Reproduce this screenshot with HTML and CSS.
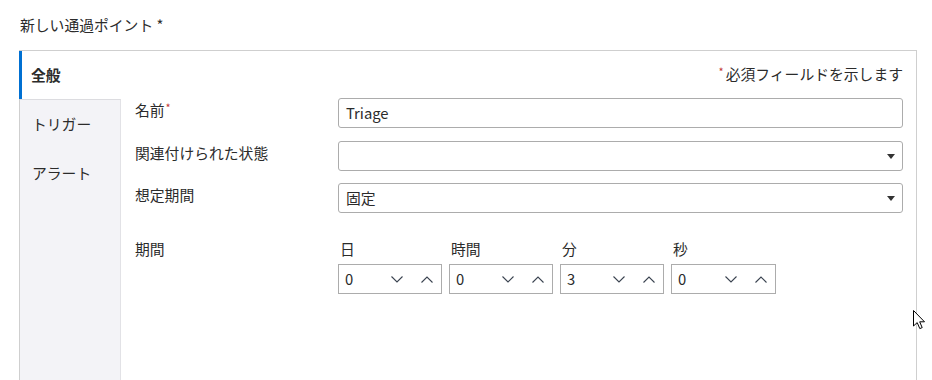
FILE: index.html
```html
<!DOCTYPE html>
<html lang="ja">
<head>
<meta charset="utf-8">
<title>新しい通過ポイント</title>
<link rel="stylesheet" href="styles.css">
</head>
<body>
<div class="page">
  <div class="title">新しい通過ポイント *</div>
  <div class="panel">
    <nav class="tabs">
      <div class="tab active">全般</div>
      <div class="tab-rest">
        <div class="tab">トリガー</div>
        <div class="tab">アラート</div>
      </div>
    </nav>
    <div class="content">
      <div class="note"><span class="req">*</span>必須フィールドを示します</div>
      <div class="form">
        <div class="row r1">
          <label class="label">名前<span class="req">*</span></label>
          <div class="input">Triage</div>
        </div>
        <div class="row r2">
          <label class="label">関連付けられた状態</label>
          <div class="input select"><span></span><i class="caret"></i></div>
        </div>
        <div class="row r3">
          <label class="label">想定期間</label>
          <div class="input select"><span>固定</span><i class="caret"></i></div>
        </div>
        <div class="row r4">
          <label class="label">期間</label>
          <div class="duration">
            <div class="unit">
              <div class="unit-label">日</div>
              <div class="spin"><span class="val">0</span>
                <svg class="chev" width="12" height="7" viewBox="0 0 12 7"><path d="M0.5 0.5 L6 6 L11.5 0.5" /></svg>
                <svg class="chev" width="12" height="7" viewBox="0 0 12 7"><path d="M0.5 6.5 L6 1 L11.5 6.5" /></svg>
              </div>
            </div>
            <div class="unit">
              <div class="unit-label">時間</div>
              <div class="spin"><span class="val">0</span>
                <svg class="chev" width="12" height="7" viewBox="0 0 12 7"><path d="M0.5 0.5 L6 6 L11.5 0.5" /></svg>
                <svg class="chev" width="12" height="7" viewBox="0 0 12 7"><path d="M0.5 6.5 L6 1 L11.5 6.5" /></svg>
              </div>
            </div>
            <div class="unit">
              <div class="unit-label">分</div>
              <div class="spin"><span class="val">3</span>
                <svg class="chev" width="12" height="7" viewBox="0 0 12 7"><path d="M0.5 0.5 L6 6 L11.5 0.5" /></svg>
                <svg class="chev" width="12" height="7" viewBox="0 0 12 7"><path d="M0.5 6.5 L6 1 L11.5 6.5" /></svg>
              </div>
            </div>
            <div class="unit">
              <div class="unit-label">秒</div>
              <div class="spin"><span class="val">0</span>
                <svg class="chev" width="12" height="7" viewBox="0 0 12 7"><path d="M0.5 0.5 L6 6 L11.5 0.5" /></svg>
                <svg class="chev" width="12" height="7" viewBox="0 0 12 7"><path d="M0.5 6.5 L6 1 L11.5 6.5" /></svg>
              </div>
            </div>
          </div>
        </div>
      </div>
    </div>
  </div>
  <svg class="cursor" width="14" height="21" viewBox="0 0 14 21"><path d="M0.5 0.5 L0.5 16 L4.2 12.6 L6.8 18.6 L9.2 17.6 L6.7 11.8 L11.5 11.8 Z" /></svg>
</div>
</body>
</html>
```

FILE: styles.css
```css
html, body {
  margin: 0;
  padding: 0;
  background: #fff;
}
body {
  font-family: "Noto Sans CJK JP", "Noto Sans", sans-serif;
  font-size: 14.8px;
  line-height: 20px;
  color: #2b2b2b;
  overflow: hidden;
}
.page {
  position: relative;
  height: 380px;
}
.title {
  padding: 15px 0 0 20px;
  height: 20px;
}
.panel {
  margin: 15px 0 0 19px;
  width: 896px;
  height: 340px;
  border: 1px solid #cfcfcf;
  border-bottom: none;
  display: flex;
}
.tabs {
  width: 101px;
  flex: none;
  display: flex;
  flex-direction: column;
}
.tab {
  height: 49px;
  line-height: 49px;
  padding-left: 12px;
  box-sizing: border-box;
}
.tab.active {
  margin-left: -1px;
  height: 48px;
  line-height: 47px;
  border-left: 3px solid #0070d2;
  padding-left: 9px;
  font-weight: bold;
  background: #fff;
}
.tab-rest {
  flex: 1;
  background: #f3f3f7;
  border-top: 1px solid #dcdce0;
  border-right: 1px solid #e2e2e6;
}
.tab-rest .tab {
  height: 48.5px;
  line-height: 48px;
}
.content {
  flex: 1;
  padding: 13px 13px 0 14px;
}
.note {
  text-align: right;
  height: 20px;
}
.req {
  color: #c23934;
  font-size: 11px;
  vertical-align: top;
  line-height: 14px;
  margin-right: 2px;
}
.label .req {
  margin-left: 1px;
}
.form {
  margin-top: 14px;
  display: flex;
  flex-direction: column;
}
.row {
  display: grid;
  grid-template-columns: 203px 1fr;
}
.r2 { margin-top: 13px; }
.r3 { margin-top: 12px; }
.r4 { margin-top: 26px; }
.label {
  padding-top: 2px;
}
.r4 .label { padding-top: 0; }
.input {
  height: 30px;
  box-sizing: border-box;
  border: 1px solid #acacac;
  border-radius: 3px;
  padding: 0 8px 0 7px;
  line-height: 28px;
  display: flex;
  align-items: center;
  justify-content: space-between;
}
.caret {
  width: 0;
  height: 0;
  border-left: 4.5px solid transparent;
  border-right: 4.5px solid transparent;
  border-top: 5px solid #333;
  margin-right: -1px;
}
.duration {
  display: flex;
  gap: 7px;
}
.unit {
  width: 104px;
  display: flex;
  flex-direction: column;
}
.unit:last-child {
  width: 105px;
}
.unit-label {
  padding-left: 2px;
  height: 20px;
}
.spin {
  margin-top: 5px;
  height: 30px;
  box-sizing: border-box;
  border: 1px solid #acacac;
  display: flex;
  align-items: center;
  padding-left: 6px;
}
.val {
  flex: 1;
}
.chev {
  fill: none;
  stroke: #3a4350;
  stroke-width: 1.1px;
  margin-right: 18px;
}
.chev + .chev {
  margin-right: 8px;
}
.cursor {
  position: absolute;
  left: 913px;
  top: 310px;
}
.cursor path {
  fill: #fff;
  stroke: #000;
  stroke-width: 1px;
}
```
